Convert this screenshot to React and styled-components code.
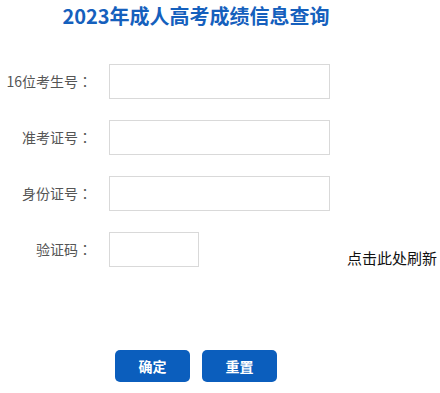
import React from "react";
import styled, { createGlobalStyle } from "styled-components";

const Global = createGlobalStyle`
  html, body { margin: 0; padding: 0; background: #fff; }
  body { font-family: "Noto Sans CJK SC", "Noto Sans", sans-serif; }
  * { box-sizing: border-box; }
`;

const Page = styled.div`
  width: 440px;
  padding-top: 3px;
`;

const Title = styled.h1`
  width: 392px;
  margin: 0;
  text-align: center;
  font-size: 20px;
  line-height: 26px;
  font-weight: 700;
  color: #1560bd;
`;

const Form = styled.form`
  margin: 35px 0 0 0;
  display: grid;
  grid-template-columns: 92px 221px;
  column-gap: 17px;
  row-gap: 21px;
`;

const Label = styled.label`
  text-align: right;
  white-space: nowrap;
  font-size: 14px;
  line-height: 35px;
  color: #555;
`;

const Colon = styled.span`
  font-family: "Noto Sans CJK TC", "Noto Sans CJK SC", sans-serif;
`;

const Field = styled.div`
  display: flex;
  align-items: flex-end;
  white-space: nowrap;
`;

const Input = styled.input`
  width: ${(p) => p.$w || 221}px;
  height: 35px;
  margin: 0;
  padding: 0 6px;
  border: 1px solid #d9d9d9;
  border-radius: 0;
  outline: none;
  font-size: 14px;
  background: #fff;
`;

const Refresh = styled.a`
  margin-left: 148px;
  margin-bottom: 2px;
  font-size: 15px;
  line-height: 15px;
  color: #111;
  text-decoration: none;
  cursor: pointer;
`;

const Buttons = styled.div`
  display: flex;
  gap: 12px;
  margin: 83px 0 0 115px;
`;

const Button = styled.button`
  width: 75px;
  height: 32px;
  border: none;
  border-radius: 5px;
  background: #0b5ebd;
  color: #fff;
  font-family: inherit;
  font-size: 14px;
  font-weight: 700;
  cursor: pointer;
`;

const rows = [
  { label: "16位考生号", id: "ksh" },
  { label: "准考证号", id: "zkzh" },
  { label: "身份证号", id: "sfzh" },
];

export default function App() {
  return (
    <Page>
      <Global />
      <Title>2023年成人高考成绩信息查询</Title>
      <Form onSubmit={(e) => e.preventDefault()}>
        {rows.map((r) => (
          <React.Fragment key={r.id}>
            <Label htmlFor={r.id}>
              {r.label}
              <Colon>：</Colon>
            </Label>
            <Field>
              <Input id={r.id} type="text" />
            </Field>
          </React.Fragment>
        ))}
        <Label htmlFor="yzm">
          验证码<Colon>：</Colon>
        </Label>
        <Field>
          <Input id="yzm" type="text" $w={90} />
          <Refresh>点击此处刷新</Refresh>
        </Field>
      </Form>
      <Buttons>
        <Button type="button">确定</Button>
        <Button type="button">重置</Button>
      </Buttons>
    </Page>
  );
}
